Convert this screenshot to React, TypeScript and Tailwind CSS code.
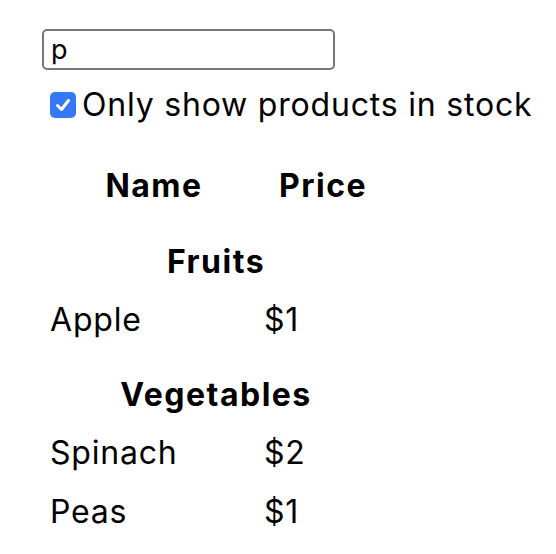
import React, { useState } from "react";

type Product = { category: string; price: string; stocked: boolean; name: string };

const PRODUCTS: Product[] = [
  { category: "Fruits", price: "$1", stocked: true, name: "Apple" },
  { category: "Fruits", price: "$1", stocked: true, name: "Dragonfruit" },
  { category: "Fruits", price: "$2", stocked: false, name: "Passionfruit" },
  { category: "Vegetables", price: "$2", stocked: true, name: "Spinach" },
  { category: "Vegetables", price: "$4", stocked: false, name: "Pumpkin" },
  { category: "Vegetables", price: "$1", stocked: true, name: "Peas" },
];

function CategoryRow({ category }: { category: string }) {
  return (
    <div className="flex h-[74px] pt-[16px] leading-[60px] font-bold tracking-[1.5px]">
      <div className="w-[338px] text-center">{category}</div>
    </div>
  );
}

function ProductRow({ product }: { product: Product }) {
  return (
    <div className="flex h-[59px] leading-[60px]">
      <div className="w-[214px] pl-[3px]">{product.name}</div>
      <div className="w-[124px] pl-[3px]">{product.price}</div>
    </div>
  );
}

export default function App() {
  const [filterText, setFilterText] = useState("p");
  const [inStockOnly, setInStockOnly] = useState(true);

  const rows: React.ReactNode[] = [];
  let lastCategory: string | null = null;
  PRODUCTS.forEach((product) => {
    if (!product.name.toLowerCase().includes(filterText.toLowerCase())) return;
    if (inStockOnly && !product.stocked) return;
    if (product.category !== lastCategory) {
      rows.push(<CategoryRow key={product.category} category={product.category} />);
    }
    rows.push(<ProductRow key={product.name} product={product} />);
    lastCategory = product.category;
  });

  return (
    <div
      className="w-[556px] h-[554px] bg-white text-black text-[32px] tracking-[0.8px] pl-[42px] pt-[29px] overflow-hidden"
      style={{ fontFamily: "Inter, sans-serif" }}
    >
      <input
        value={filterText}
        onChange={(e) => setFilterText(e.target.value)}
        className="block w-[293px] h-[41px] border-2 border-[#767676] rounded-[5px] px-[7px] text-[27px] outline-none"
        style={{ fontFamily: "Inter, sans-serif" }}
      />
      <label className="flex items-center mt-[15px] h-[40px] leading-[40px] pl-[8px]">
        <span
          onClick={() => setInStockOnly(!inStockOnly)}
          className="flex items-center justify-center w-[26px] h-[26px] rounded-[5px] bg-[#3478f6] mr-[6px] shrink-0"
        >
          {inStockOnly && (
            <svg width="18" height="18" viewBox="0 0 18 18" fill="none">
              <path d="M3.5 9.5 L7.5 13.5 L14.5 4.5" stroke="white" strokeWidth="3" strokeLinecap="round" strokeLinejoin="round" />
            </svg>
          )}
        </span>
        Only show products in stock
      </label>
      <div className="mt-[31px] pl-[5px]">
        <div className="flex h-[60px] leading-[60px] font-bold tracking-[1.5px]">
          <div className="w-[214px] text-center">Name</div>
          <div className="w-[124px] text-center">Price</div>
        </div>
        {rows}
      </div>
    </div>
  );
}
